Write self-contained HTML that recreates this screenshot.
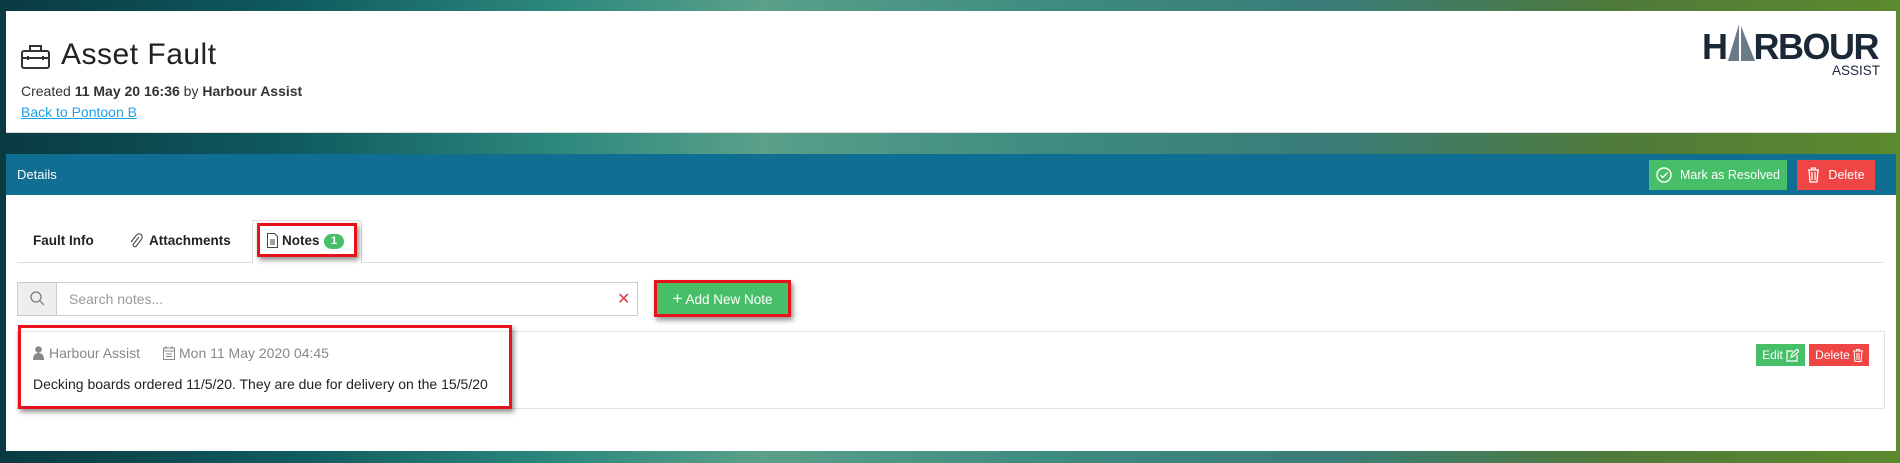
<!DOCTYPE html>
<html><head><meta charset="utf-8"><style>
*{box-sizing:border-box;margin:0;padding:0}
body{width:1900px;height:463px;overflow:hidden;font-family:"Liberation Sans",sans-serif;position:relative;
background:linear-gradient(90deg,#0a3a42 0%,#0e5a5e 15%,#2f8a7e 30%,#5aa08a 40%,#3e8c80 55%,#3a7c78 70%,#4f7a3a 85%,#5c8a2e 100%);}
.abs{position:absolute}
.hdr{left:6px;top:11px;width:1890px;height:122px;background:#fff;border-bottom:1px solid #ddd}
.bar{left:6px;top:154px;width:1890px;height:41px;background:#106e92;color:#fff;font-size:13px}
.panel{left:6px;top:195px;width:1890px;height:256px;background:#fff}
.btn{position:absolute;color:#fff;font-size:12.5px;display:flex;align-items:center;justify-content:center;gap:8px}
.redbox{position:absolute;border:3px solid #e8121b;box-shadow:2px 3px 5px rgba(0,0,0,.45)}
</style></head><body>
<div class="abs hdr"></div>
<svg class="abs" style="left:21px;top:44px" width="29" height="25" viewBox="0 0 29 25" fill="none" stroke="#333" stroke-width="2"><rect x="1" y="7" width="27" height="17" rx="2"/><path d="M9 7V2h11v5M1 14h27M7 12v4M22 12v4"/></svg>
<div class="abs" style="left:61px;top:38px;font-size:30px;color:#222;letter-spacing:.5px">Asset Fault</div>
<div class="abs" style="left:21px;top:83px;font-size:14px;color:#333">Created <b>11 May 20 16:36</b> by <b>Harbour Assist</b></div>
<div class="abs" style="left:21px;top:104px;font-size:14px;color:#1ea1e8;text-decoration:underline">Back to Pontoon B</div>
<div class="abs" style="left:1702px;top:29px;font-size:36px;font-weight:bold;color:#1b2838;letter-spacing:-1.5px;line-height:36px">H<span style="display:inline-block;width:27px"></span>RBOUR</div>
<svg class="abs" style="left:1727px;top:24px" width="30" height="38"><path d="M12 0L1 37h11z M14 2L28 37H14z" fill="#6b7a88"/></svg>
<div class="abs" style="left:1832px;top:63px;font-size:13.5px;color:#1b2838">ASSIST</div>
<div class="abs bar"><span style="position:absolute;left:11px;top:13px">Details</span></div>
<div class="btn" style="left:1649px;top:160px;width:138px;height:30px;background:#47bf68"><svg width="16" height="16" viewBox="0 0 16 16" fill="none" stroke="#fff" stroke-width="1.4"><circle cx="8" cy="8" r="7"/><path d="M4.5 8.2l2.3 2.3 4.5-4.8"/></svg>Mark as Resolved</div>
<div class="btn" style="left:1797px;top:160px;width:78px;height:30px;background:#f04545"><svg width="13" height="16" viewBox="0 0 13 16" fill="none" stroke="#fff" stroke-width="1.3"><path d="M1 3h11M4.5 3V1h4v2M2 3l1 12h7l1-12M5 5v8M8 5v8"/></svg>Delete</div>
<div class="abs panel"></div>
<div class="abs" style="left:17px;top:262px;width:1866px;height:1px;background:#ddd"></div>
<div class="abs" style="left:252px;top:220px;width:110px;height:43px;background:#fff;border:1px solid #ddd;border-bottom:none"></div>
<div class="abs" style="left:33px;top:233px;font-size:13.5px;font-weight:bold;color:#222">Fault Info</div>
<svg class="abs" style="left:129px;top:232px" width="14" height="17" viewBox="0 0 14 17" fill="none" stroke="#555" stroke-width="1.2"><path d="M10 5L4.5 12a1.8 1.8 0 0 0 2.8 2.2L12.5 7a3.2 3.2 0 0 0-5-4L2 10"/></svg>
<div class="abs" style="left:149px;top:233px;font-size:13.5px;font-weight:bold;color:#222">Attachments</div>
<svg class="abs" style="left:267px;top:233px" width="11" height="15" viewBox="0 0 11 15" fill="none" stroke="#444"><path d="M.5.5h7l3 3v11H.5z M3 7h5M3 9h5M3 11h5"/></svg>
<div class="abs" style="left:282px;top:233px;font-size:13.5px;font-weight:bold;color:#222">Notes</div>
<div class="abs" style="left:324px;top:234px;width:20px;height:15px;border-radius:8px;background:#47bf68;color:#fff;font-size:11px;font-weight:bold;text-align:center;line-height:15px">1</div>
<div class="redbox" style="left:257px;top:223px;width:100px;height:34px"></div>
<div class="abs" style="left:17px;top:282px;width:621px;height:34px;border:1px solid #ccc;background:#fff"></div>
<div class="abs" style="left:17px;top:282px;width:40px;height:34px;border:1px solid #ccc;background:#eee"></div>
<svg class="abs" style="left:30px;top:291px" width="15" height="16" fill="none" stroke="#777" stroke-width="1.2"><circle cx="6" cy="6" r="5"/><path d="M9.5 9.5l4.5 4.5"/></svg>
<div class="abs" style="left:69px;top:291px;font-size:14px;color:#999">Search notes...</div>
<div class="abs" style="left:617px;top:289px;font-size:16px;color:#e04040">✕</div>
<div class="abs" style="left:657px;top:283px;width:131px;height:31px;background:#47bf68;color:#fff;font-size:13.5px;text-align:center;line-height:31px"><span style="font-size:17px">+</span> Add New Note</div>
<div class="redbox" style="left:654px;top:280px;width:137px;height:37px"></div>
<div class="abs" style="left:17px;top:331px;width:1868px;height:78px;border:1px solid #e2e2e2"></div>
<svg class="abs" style="left:33px;top:346px" width="11" height="14" fill="#888"><circle cx="5.5" cy="3.5" r="3.3"/><path d="M0 14c0-5 2-7 5.5-7S11 9 11 14z"/></svg>
<div class="abs" style="left:49px;top:345px;font-size:14px;color:#888">Harbour Assist</div>
<svg class="abs" style="left:163px;top:346px" width="12" height="14" fill="none" stroke="#888"><rect x=".5" y="2" width="11" height="11.5"/><path d="M.5 5h11M3 0v3M9 0v3M3 8h6M3 10.5h6"/></svg>
<div class="abs" style="left:179px;top:345px;font-size:14px;color:#888">Mon 11 May 2020 04:45</div>
<div class="abs" style="left:33px;top:376px;font-size:14px;color:#222">Decking boards ordered 11/5/20. They are due for delivery on the 15/5/20</div>
<div class="redbox" style="left:18px;top:325px;width:494px;height:84px"></div>
<div class="btn" style="left:1756px;top:344px;width:49px;height:22px;background:#47bf68;font-size:12px;gap:3px">Edit <svg width="13" height="13" fill="none" stroke="#fff" stroke-width="1.2"><path d="M7 2H1v10h10V6M5 8l1-3 5-5 2 2-5 5z"/></svg></div>
<div class="btn" style="left:1809px;top:344px;width:60px;height:22px;background:#f04545;font-size:12px;gap:3px">Delete <svg width="10" height="13" fill="none" stroke="#fff"><path d="M0 2h10M3.5 2V.5h3V2M1 2l1 10.5h6L9 2M4 4v7M6 4v7"/></svg></div>
</body></html>
